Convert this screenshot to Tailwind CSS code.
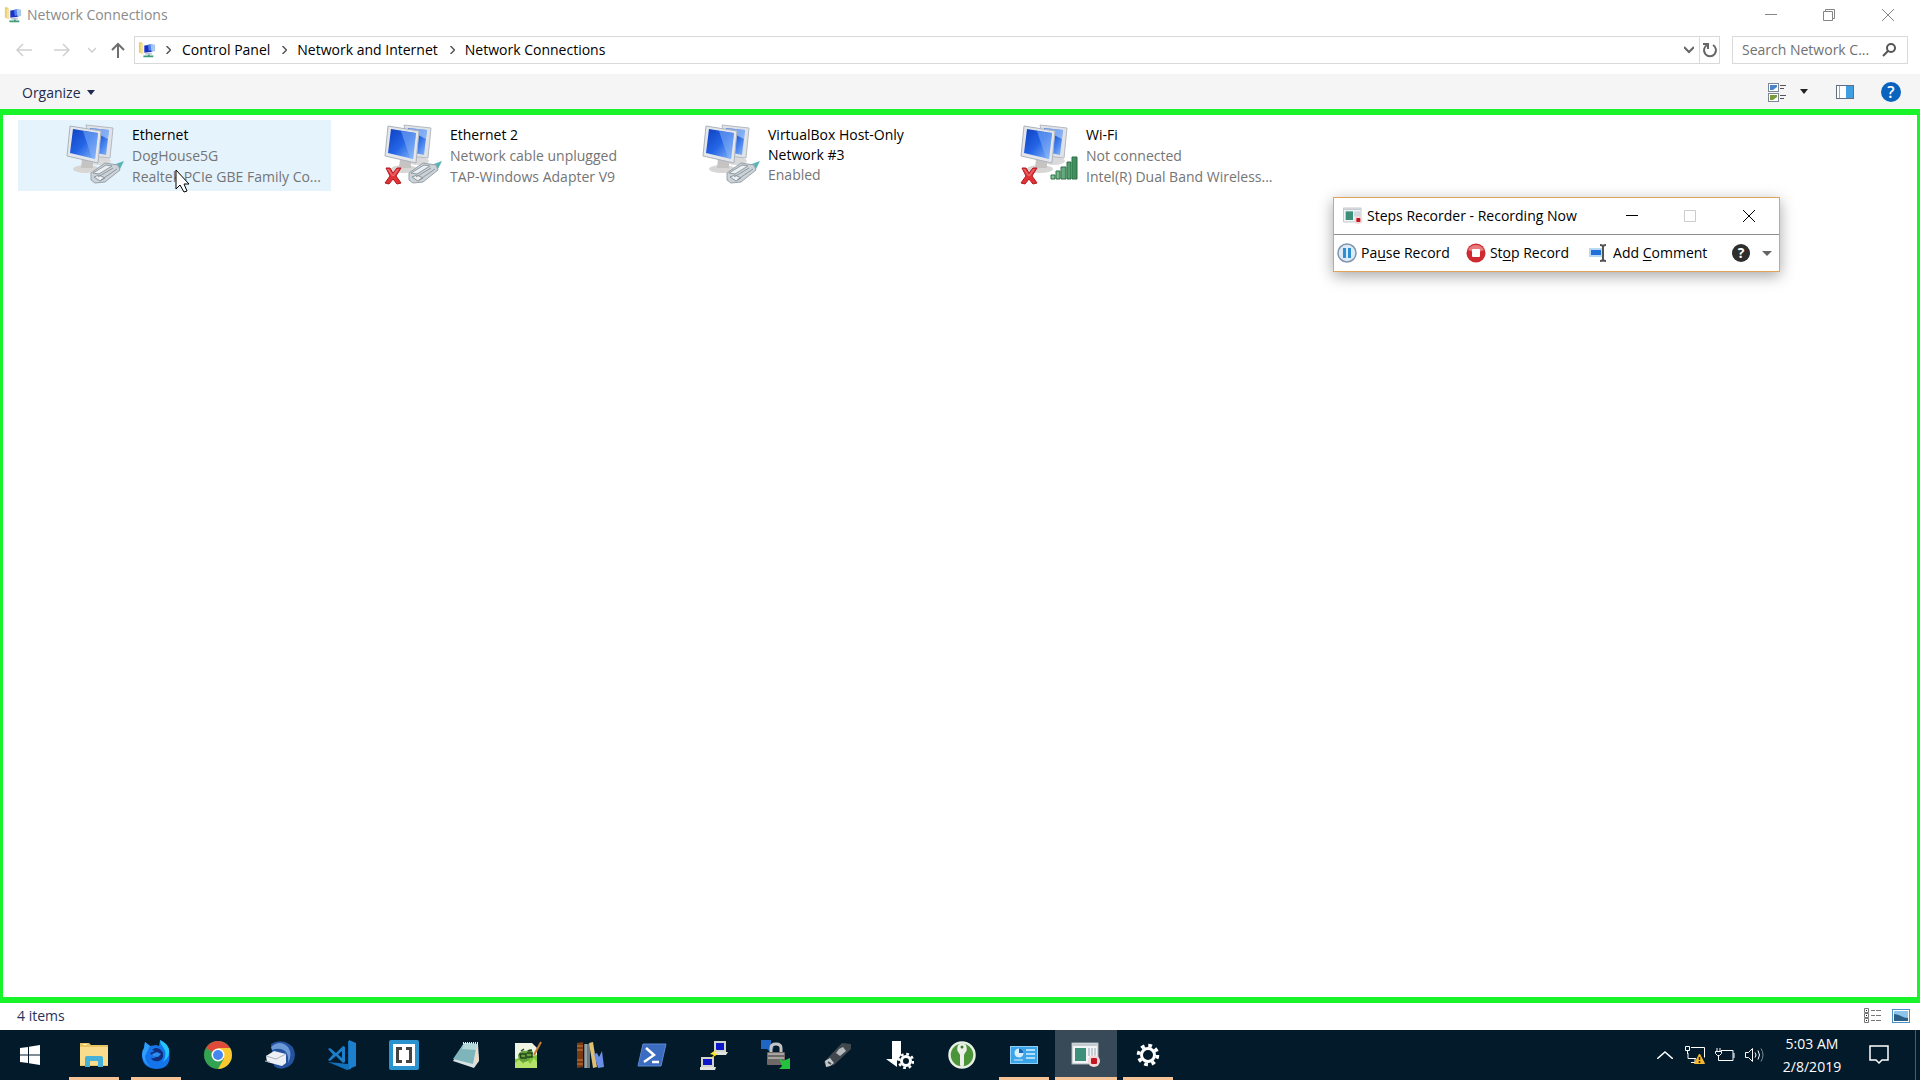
<!DOCTYPE html>
<html lang="en">
<head>
    <meta charset="UTF-8">
    <meta name="viewport" content="width=device-width, initial-scale=1.0">
    <title>Network Connections</title>
    <script src="https://cdn.jsdelivr.net/npm/@tailwindcss/browser@4"></script>
</head>
<body class="h-screen flex flex-col overflow-hidden bg-white text-sm text-black font-['Open_Sans',sans-serif]">

    <!-- shared icons -->
    <svg class="absolute size-0" aria-hidden="true">
        <defs>
            <linearGradient id="screen" x1="0" y1="0" x2="1" y2="1">
                <stop offset="0" stop-color="#0c3fc0"/>
                <stop offset=".5" stop-color="#2566e6"/>
                <stop offset="1" stop-color="#8cbcfa"/>
            </linearGradient>
            <linearGradient id="bars" x1="0" y1="0" x2="1" y2="0">
                <stop offset="0" stop-color="#8ec9a0"/>
                <stop offset="1" stop-color="#358a55"/>
            </linearGradient>
            <symbol id="net-small" viewBox="0 0 20 20">
                <path d="M1 1l4 1v12l-4-1z" fill="#e8cf6a"/>
                <path d="M3 3l3 1v11l-3-1z" fill="#f4e3a0"/>
                <path d="M7 5l9-1v8l-9 1z" fill="#1a2fc4"/>
                <path d="M11 4l5 0v6l-4 1z" fill="#4f7fee"/>
                <path d="M14 4h5v7l-4 1z" fill="#a9c6ee"/>
                <path d="M8 13h7l1 2H8z" fill="#bcc6d0"/>
                <path d="M6 17h11M12 15v3" stroke="#3f9a7c" stroke-width="2"/>
            </symbol>
            <symbol id="pcs" viewBox="0 0 60 60">
                <ellipse cx="34" cy="37" rx="11" ry="4" fill="#dadada"/>
                <path d="M20 1l27 3-3 30-18-2z" fill="#dfe3e8" stroke="#b4bac1"/>
                <path d="M24 4l19 2-3 25-14-3z" fill="url(#screen)"/>
                <path d="M24 4l19 2-1 9-16-8z" fill="#c0dcfc" opacity=".6"/>
                <ellipse cx="20" cy="45" rx="13" ry="4" fill="#d8d6d4"/>
                <path d="M16 35h11l0 9H15z" fill="#c6c4c2"/>
                <path d="M4 2l31 5-3 32L1 32z" fill="#e3e6ea" stroke="#acb3bb"/>
                <path d="M7 5l25 4-3 26L4 29z" fill="url(#screen)"/>
                <path d="M17 7l15 2-3 26-3-1z" fill="#8ab6f8" opacity=".5"/>
            </symbol>
            <symbol id="plug" viewBox="0 0 34 24">
                <path d="M23 5l11-4-4 8-6 3z" fill="#5ab4b6"/>
                <path d="M1 13L15 3l13 2 2 5-15 12-10 1-4-3z" fill="#ccd3d8" stroke="#98a2aa"/>
                <path d="M3 13L16 5l6 1L9 14z" fill="#eceff1" stroke="#8f9aa2"/>
                <path d="M8 17L23 8M11 20L27 9M4 17l5-2 6 3-5 3z" stroke="#8b969e" fill="#eef0f2"/>
            </symbol>
            <symbol id="cross" viewBox="0 0 18 18">
                <path d="M2 1l4 0 3 5 4-5h4l-5 8 5 7-4 1-4-5-4 5-4-1 5-7z" fill="#e23237" stroke="#b3171c"/>
                <path d="M3 2h2l4 6 4-6h2l-5 7H8z" fill="#f08a8c" opacity=".6"/>
            </symbol>
            <symbol id="signal" viewBox="0 0 28 24">
                <path d="M1 19h4v4H1zM6 15h4v8H6zM11 11h5v12h-5zM17 6h4v17h-4zM22 1h5v22h-5z" fill="url(#bars)" stroke="#2d6f47"/>
            </symbol>
            <symbol id="recorder" viewBox="0 0 30 26">
                <rect x="1" y="1" width="26" height="21" fill="#f2f4f5" stroke="#a9b2b8"/>
                <path d="M2 2h24v2H2z" fill="#c2cbd1"/>
                <path d="M4 6h11v13H4z" fill="#3d917b"/>
                <path d="M18 6v8M21 6v8M24 6v8" stroke="#93a8b5"/>
                <circle cx="23" cy="19" r="6" fill="#f3d9da"/>
                <rect x="20" y="16" width="6" height="6" rx="1" fill="#c41620"/>
            </symbol>
        </defs>
    </svg>

    <header>
        <div class="flex items-center h-[30px] pl-1 pr-0.5">
            <svg class="size-[18px]"><use href="#net-small"/></svg>
            <h1 class="ml-[5px] text-[#8a8a8a]">Network Connections</h1>
            <div class="ml-auto flex text-[#858585]">
                <button class="w-[58px] h-7 flex items-center justify-center" aria-label="Minimize">
                    <svg class="size-3" viewBox="0 0 12 12" stroke="currentColor"><path d="M0 5.500h12"/></svg>
                </button>
                <button class="w-[58px] h-7 flex items-center justify-center" aria-label="Restore">
                    <svg class="size-3" viewBox="0 0 12 12" fill="none" stroke="currentColor"><path d="M.5 2.500h9v9h-9zM2.500 2.500v-2h9v9h-2"/></svg>
                </button>
                <button class="w-[60px] h-7 flex items-center justify-center" aria-label="Close">
                    <svg class="size-3" viewBox="0 0 12 12" stroke="currentColor"><path d="M0 0l12 12M12 0L0 12"/></svg>
                </button>
            </div>
        </div>

        <div class="flex items-center h-10 mb-1 pr-3">
            <nav class="flex items-center w-[134px] pl-4" aria-label="History">
                <button class="w-[38px]" aria-label="Back">
                    <svg class="w-4 h-3.5" viewBox="0 0 16 14" fill="none" stroke="#cfcfcf" stroke-width="1.500"><path d="M16 7H1M7 1L1 7l6 6"/></svg>
                </button>
                <button class="w-[34px]" aria-label="Forward">
                    <svg class="w-4 h-3.5" viewBox="0 0 16 14" fill="none" stroke="#cfcfcf" stroke-width="1.500"><path d="M0 7h15M9 1l6 6-6 6"/></svg>
                </button>
                <button class="w-[22px]" aria-label="Recent locations">
                    <svg class="w-2 h-1.5" viewBox="0 0 8 6" fill="none" stroke="#cfcfcf" stroke-width="1.500"><path d="M0 1l4 4 4-4"/></svg>
                </button>
                <button aria-label="Up">
                    <svg class="w-4 h-4" viewBox="0 0 16 16" fill="none" stroke="#6e6e6e" stroke-width="2"><path d="M8 16V2M2 8l6-6 6 6"/></svg>
                </button>
            </nav>
            <div class="flex-1 flex items-center h-7 border border-[#d9d9d9]">
                <svg class="size-[18px] ml-[3px]"><use href="#net-small"/></svg>
                <svg class="w-[5px] h-2 ml-2.5" viewBox="0 0 5 8" fill="none" stroke="#555" stroke-width="1.500"><path d="M.5 0l4 4-4 4"/></svg>
                <a href="#" class="ml-[11px]">Control Panel</a>
                <svg class="w-[5px] h-2 ml-3" viewBox="0 0 5 8" fill="none" stroke="#555" stroke-width="1.500"><path d="M.5 0l4 4-4 4"/></svg>
                <a href="#" class="ml-2.5">Network and Internet</a>
                <svg class="w-[5px] h-2 ml-3" viewBox="0 0 5 8" fill="none" stroke="#555" stroke-width="1.500"><path d="M.5 0l4 4-4 4"/></svg>
                <a href="#" class="ml-2.5">Network Connections</a>
                <button class="ml-auto w-5 flex justify-center" aria-label="Previous locations">
                    <svg class="w-2.5 h-2" viewBox="0 0 10 8" fill="none" stroke="#666" stroke-width="2"><path d="M0 1l5 5 5-5"/></svg>
                </button>
                <button class="w-5 h-full flex items-center justify-center border-l border-[#d9d9d9]" aria-label="Refresh">
                    <svg class="size-4" viewBox="0 0 16 16" fill="none" stroke="#666" stroke-width="2"><path d="M11 3A6 6 0 1 1 5 3"/><path d="M1 2h5v5"/></svg>
                </button>
            </div>
            <form class="ml-3 w-[176px] h-7 flex items-center border border-[#d9d9d9]">
                <input id="search" type="text" aria-label="Search Network Connections" placeholder="Search Network C..." class="flex-1 min-w-0 pl-[9px] outline-none placeholder:text-[#717171]">
                <button class="w-9 flex justify-center" type="submit" aria-label="Search">
                    <svg class="size-3.5" viewBox="0 0 14 14" fill="none" stroke="#555" stroke-width="2"><circle cx="9" cy="5" r="4"/><path d="M6 8l-5 5"/></svg>
                </button>
            </form>
        </div>

        <div class="flex items-center h-[35px] pl-[22px] pr-[19px] bg-[#f5f5f6] text-[#1e2b4d]">
            <button class="flex items-center gap-1.5 pt-0.5">
                Organize
                <svg class="w-2 h-[5px]" viewBox="0 0 8 5" fill="currentColor"><path d="M0 0h8L4 5z"/></svg>
            </button>
            <div class="ml-auto flex items-center">
                <button aria-label="View">
                    <svg class="w-[18px] h-5" viewBox="0 0 18 20">
                        <rect x=".5" y="1.500" width="10" height="8" fill="#fff" stroke="#7d8794"/>
                        <path d="M2 3h7v2L5 8H2z" fill="#4b83c9"/>
                        <rect x=".5" y="11.500" width="10" height="8" fill="#fff" stroke="#7d8794"/>
                        <path d="M2 13h7v2l-4 3H2z" fill="#7b9a3c"/>
                        <path d="M12 3.500h6M12 6.500h4M12 13.500h6M12 16.500h4" stroke="#555"/>
                    </svg>
                </button>
                <button class="ml-3.5" aria-label="More view options">
                    <svg class="w-2 h-[5px]" viewBox="0 0 8 5" fill="#222"><path d="M0 0h8L4 5z"/></svg>
                </button>
                <button class="ml-7" aria-label="Preview pane">
                    <svg class="w-[18px] h-3.5" viewBox="0 0 18 14">
                        <rect x=".5" y=".5" width="17" height="13" fill="#fff" stroke="#5d6f80"/>
                        <path d="M3.500 1v12" stroke="#9aa7b2"/>
                        <path d="M10 1h7v12h-7z" fill="#3f9fe0"/>
                    </svg>
                </button>
                <button class="ml-[27px] size-5 rounded-full bg-[#0a64bd] text-white text-base leading-5 font-semibold" aria-label="Help">?</button>
            </div>
        </div>
    </header>

    <main class="relative flex-1 border-x-[3px] border-y-[6px] border-[#17f52a]">
        <ul class="flex flex-wrap gap-x-[5px] pl-[15px] pt-[5px] leading-[21px] text-[#757575]">
            <li class="flex w-[313px] h-[71px] pl-12 pt-1 bg-[#e5f3fd]">
                <div class="relative w-[66px] shrink-0">
                    <svg class="size-[60px]"><use href="#pcs"/></svg>
                    <svg class="absolute left-6 top-9 w-[34px] h-6"><use href="#plug"/></svg>
                </div>
                <div class="min-w-0">
                    <h2 class="text-black">Ethernet</h2>
                    <p>DogHouse5G</p>
                    <p class="truncate">Realtek PCIe GBE Family Co...</p>
                </div>
            </li>
            <li class="flex w-[313px] h-[71px] pl-12 pt-1">
                <div class="relative w-[66px] shrink-0">
                    <svg class="size-[60px]"><use href="#pcs"/></svg>
                    <svg class="absolute left-6 top-9 w-[34px] h-6"><use href="#plug"/></svg>
                    <svg class="absolute left-0 top-[43px] size-[18px]"><use href="#cross"/></svg>
                </div>
                <div class="min-w-0">
                    <h2 class="text-black">Ethernet 2</h2>
                    <p>Network cable unplugged</p>
                    <p class="truncate">TAP-Windows Adapter V9</p>
                </div>
            </li>
            <li class="flex w-[313px] h-[71px] pl-12 pt-1">
                <div class="relative w-[66px] shrink-0">
                    <svg class="size-[60px]"><use href="#pcs"/></svg>
                    <svg class="absolute left-6 top-9 w-[34px] h-6"><use href="#plug"/></svg>
                </div>
                <div class="min-w-0 pt-px leading-5">
                    <h2 class="text-black">VirtualBox Host-Only<br>Network #3</h2>
                    <p>Enabled</p>
                </div>
            </li>
            <li class="flex w-[313px] h-[71px] pl-12 pt-1">
                <div class="relative w-[66px] shrink-0">
                    <svg class="size-[60px]"><use href="#pcs"/></svg>
                    <svg class="absolute left-[30px] top-8 w-7 h-6"><use href="#signal"/></svg>
                    <svg class="absolute left-0 top-[43px] size-[18px]"><use href="#cross"/></svg>
                </div>
                <div class="min-w-0">
                    <h2 class="text-black">Wi-Fi</h2>
                    <p>Not connected</p>
                    <p class="truncate">Intel(R) Dual Band Wireless...</p>
                </div>
            </li>
        </ul>
    </main>

    <footer class="flex items-center h-[27px] pl-[17px] pr-2.5 pb-0.5 text-[#26335c]">
        <span>4 items</span>
        <div class="ml-auto flex items-center gap-2.5">
            <button aria-label="Details view">
                <svg class="w-[18px] h-4" viewBox="0 0 18 16" fill="none" stroke="#777">
                    <path d="M.5.5h4v4h-4zM.5 5.500h4v4h-4zM.5 10.500h4v4h-4zM7 2.500h4m1 0h5M7 7.500h4m1 0h5M7 12.500h4m1 0h5"/>
                    <path d="M2 2.500h1M2 7.500h1M2 12.500h1" stroke="#222"/>
                </svg>
            </button>
            <button aria-label="Large icons view">
                <svg class="w-[18px] h-3.5" viewBox="0 0 18 14">
                    <rect x=".5" y=".5" width="17" height="13" fill="#fff" stroke="#4a90c8"/>
                    <path d="M2 2h14v10H2z" fill="#8cc4ea"/>
                    <path d="M2 5c5 0 9 4 14 4v3H2z" fill="#2c5f86"/>
                </svg>
            </button>
        </div>
    </footer>

    <!-- taskbar -->
    <div class="flex h-[50px] bg-[#031a2a] text-white">
        <button class="w-[63px] pr-[3px] flex items-center justify-center" aria-label="Start">
            <svg class="size-5" viewBox="0 0 20 20" fill="#fff"><path d="M0 3l8-1v7.500H0zM9 1.800L20 0v9.500H9zM0 10.500h8V18l-8-1zM9 10.500h11V20L9 18.200z"/></svg>
        </button>
        <button class="relative w-[62px] flex items-center justify-center" aria-label="File Explorer">
            <svg class="size-7" viewBox="0 0 28 28">
                <path d="M0 2h9l2 2h17v21H0z" fill="#e9c465"/>
                <path d="M0 6h28v18H0z" fill="#f9dc8c"/>
                <path d="M5 17q0-2 2-2h14q2 0 2 2v9h-5v-6h-8v6H5z" fill="#45b0d8"/>
                <path d="M3 3.500h4" stroke="#fff3c4"/>
            </svg>
            <span class="absolute bottom-0 inset-x-1.5 h-[3px] bg-[#f5c396]"></span>
        </button>
        <button class="relative w-[62px] flex items-center justify-center" aria-label="Firefox">
            <svg class="size-[30px]" viewBox="0 0 30 30">
                <path d="M3 8L4 2l5 4 6-1 3 1 1-6q8 5 9 12 3 17-13 17Q1 28 1 15q0-4 2-7z" fill="#1474ea"/>
                <path d="M19 0q0 4 3 7 5 7 0 15 8-6 6-13-2-6-9-9z" fill="#23c5fa"/>
                <path d="M3 8L4 2l5 4-2 4-3 6q0 8 7 11-9-3-10-12 0-4 2-7z" fill="#2ea0fb"/>
                <path d="M11 10l3-2q6 0 8 5 1 6-4 8-6 1-8-3 4 1 6-2l-5-1-2-2q3-1 5-2z" fill="#122c7c"/>
                <path d="M11 14l5-2 4 2-3 3-5-1z" fill="#2b8df0"/>
            </svg>
            <span class="absolute bottom-0 inset-x-1.5 h-[3px] bg-[#f5c396]"></span>
        </button>
        <button class="w-[62px] flex items-center justify-center" aria-label="Chrome">
            <svg class="size-7" viewBox="0 0 28 28">
                <circle cx="14" cy="14" r="14" fill="#34a253"/>
                <path d="M14 14L1.900 7A14 14 0 0 1 26.100 7z" fill="#e04a3a"/>
                <path d="M14 7h12.100A14 14 0 0 1 14 28l6-10.500z" fill="#fbc92f"/>
                <circle cx="14" cy="14" r="6.500" fill="#fff"/>
                <circle cx="14" cy="14" r="5" fill="#4487f0"/>
            </svg>
        </button>
        <button class="w-[62px] flex items-center justify-center" aria-label="Thunderbird">
            <svg class="w-[30px] h-7" viewBox="0 0 30 28">
                <path d="M6 3Q12-1 20 1q9 3 10 12 0 11-10 14-7 2-11-2z" fill="#24529f"/>
                <path d="M6 6Q15-2 23 6q5 7 0 16 1-8-3-12-5-4-13-1z" fill="#6d9ad6"/>
                <path d="M1 15l8-5 12 3 0 9-4 3L2 21z" fill="#eceff4"/>
                <path d="M1 15l10 3 10-5M0 20l5 1" fill="none" stroke="#a9b2c2"/>
            </svg>
        </button>
        <button class="w-[62px] flex items-center justify-center" aria-label="Visual Studio Code">
            <svg class="size-[30px]" viewBox="0 0 30 30">
                <path d="M1 22l20 2V1l3 0v28l-4 1z" fill="#1273bd"/>
                <path d="M22 0l7 3v23l-7 3z" fill="#1d80cf"/>
                <path d="M3 8l6 5 7-7 2 1v15l-2 1-7-7-6 5-2-1 5-5.500-5-5.500zM15 11l-4 3.500 4 3.500z" fill="#1b7fca" fill-rule="evenodd"/>
            </svg>
        </button>
        <button class="w-[62px] flex items-center justify-center" aria-label="Brackets">
            <svg class="size-[30px]" viewBox="0 0 30 30">
                <rect width="30" height="30" rx="2" fill="#2a93cf"/>
                <rect x="4" y="4" width="22" height="22" fill="#fff"/>
                <path d="M13 8.500H8.500v13H13M17 8.500h4.500v13H17" fill="none" stroke="#444" stroke-width="3"/>
            </svg>
        </button>
        <button class="w-[62px] flex items-center justify-center" aria-label="Notepad">
            <svg class="w-7 h-[26px]" viewBox="0 0 28 26">
                <path d="M12 1l14 1 1 17-5 7-21-7z" fill="#d6e3e4"/>
                <path d="M12 1l13 1-4 20-20-5z" fill="#7eb5ba"/>
                <path d="M12 1l13 1-1 6-14-1z" fill="#b5d8da"/>
                <path d="M25 2l2 16-5 6z" fill="#efd9c7"/>
                <path d="M11 1h15" stroke="#e9eef0" stroke-dasharray="1 1" stroke-width="2"/>
            </svg>
        </button>
        <button class="w-[62px] flex items-center justify-center" aria-label="Notepad++">
            <svg class="size-7" viewBox="0 0 28 28">
                <path d="M1 2h17l5 5v20H1z" fill="#eef5e4"/>
                <path d="M1 18l22-4v13H1z" fill="#7fc63a"/>
                <path d="M1 22l5-4 3 5 4-5 3 5 4-6 3 4v6H1z" fill="#b5e26a"/>
                <path d="M4 14q3-5 8-4l4-2 3 3-2 5q-3 6-9 5-4-2-4-7z" fill="#64a23c"/>
                <path d="M6 13h6v4H7zM13 12h5v4h-5M7 10l3-2M14 10l4-1" fill="none" stroke="#26451d" stroke-width="1.500"/>
                <path d="M27 1l-7 13" stroke="#c67a2d" stroke-width="2"/>
            </svg>
        </button>
        <button class="w-[62px] flex items-center justify-center" aria-label="Library">
            <svg class="size-7" viewBox="0 0 28 28">
                <path d="M1 2l6-1v25l-6 1z" fill="#7b3c15"/>
                <path d="M1 5h6M1 9h6M1 19h6M1 23h6" stroke="#c9803f"/>
                <path d="M8 3h6v24H8z" fill="#6b7a80"/>
                <path d="M10 3v24" stroke="#96a4a8" stroke-width="2"/>
                <path d="M13 2l4-1 4 25-4 1z" fill="#e0bf73"/>
                <path d="M18 13l3-1 2 4 3-6 2 16-6 1z" fill="#6b8fe6"/>
            </svg>
        </button>
        <button class="w-[62px] flex items-center justify-center" aria-label="PowerShell">
            <svg class="w-[30px] h-6" viewBox="0 0 30 24">
                <path d="M6 1h23l-5 22H1z" fill="#3b6cc0" stroke="#5b88d2"/>
                <path d="M9 5l8 7-10 7M15 19h7" fill="none" stroke="#fff" stroke-width="2.500"/>
            </svg>
        </button>
        <button class="w-[62px] flex items-center justify-center" aria-label="PuTTY">
            <svg class="w-7 h-[30px]" viewBox="0 0 28 30">
                <path d="M14 1h12v11H14zM1 17h13v10H1z" fill="#d3d3cd"/>
                <path d="M16 3h8v7h-8zM3 19h9v6H3z" fill="#0b16c9"/>
                <path d="M13 12h15l-2 3H13zM0 27h16l-1 3H0z" fill="#e4e4df"/>
                <path d="M17 9l-7 5 4 1-4 4 8-5-4-1z" fill="#ffe625"/>
            </svg>
        </button>
        <button class="w-[62px] flex items-center justify-center" aria-label="WinSCP">
            <svg class="size-[30px]" viewBox="0 0 30 30">
                <path d="M0 0h10v4l3 4-5 3-2-2H0z" fill="#1e66c2"/>
                <path d="M10 14V8q0-4 5-4t5 4v6" fill="none" stroke="#c2c5c6" stroke-width="3"/>
                <rect x="6" y="12" width="18" height="13" rx="1" fill="#6e6967"/>
                <path d="M7 14h16M7 18h16" stroke="#a8a4a1" stroke-width="2"/>
                <path d="M18 18l4 3 7-3v11H18l3-3z" fill="#25c23d"/>
            </svg>
        </button>
        <button class="w-[62px] flex items-center justify-center" aria-label="USB drive">
            <svg class="w-7 h-[26px]" viewBox="0 0 28 26">
                <path d="M18 1l9 1 0 5-17 16-7 2-3-5z" fill="#41484d"/>
                <path d="M15 7l4-2 3 4-6 5-4-3z" fill="#b4babd"/>
                <path d="M1 19l5-3 4 5-4 3-4 1z" fill="#c4cbce"/>
                <path d="M4 20l3 2" stroke="#4a5156" stroke-width="2"/>
            </svg>
        </button>
        <button class="w-[62px] flex items-center justify-center" aria-label="Download settings">
            <svg class="size-7" viewBox="0 0 28 28">
                <path d="M6 0h9v14l-4 6v6L0 18h6z" fill="#fff"/>
                <circle cx="20" cy="20" r="4.500" fill="none" stroke="#fff" stroke-width="3"/>
                <circle cx="20" cy="20" r="7" fill="none" stroke="#fff" stroke-width="2.500" stroke-dasharray="2.750 2.750"/>
            </svg>
        </button>
        <button class="w-[62px] flex items-center justify-center" aria-label="KeePass">
            <svg class="size-7" viewBox="0 0 28 28">
                <circle cx="14" cy="14" r="12.500" fill="#4c9438" stroke="#e7f0e3" stroke-width="2.500"/>
                <path d="M10 4q4-3 8 0 2 5-1 8l-1 2v10l-2 3-2-3V14l-1-2q-3-3-1-8z" fill="#eef1ea"/>
                <circle cx="14" cy="6" r="1.500" fill="#3a7a2c"/>
            </svg>
        </button>
        <button class="relative w-[62px] flex items-center justify-center" aria-label="Control Panel">
            <svg class="w-7 h-[18px]" viewBox="0 0 28 18">
                <rect x=".5" y=".5" width="27" height="17" fill="#3aa5ea" stroke="#8fd0f7"/>
                <circle cx="9" cy="7" r="4.500" fill="#d7f0ff"/>
                <path d="M9 7V2.500A4.500 4.500 0 0 1 13.500 7z" fill="#1466b8"/>
                <path d="M16 4h9M16 8h9M16 12h9" stroke="#d6efff" stroke-width="1.500"/>
                <path d="M4 14h9" stroke="#d6efff"/>
            </svg>
            <span class="absolute bottom-0 inset-x-1.5 h-[3px] bg-[#f5c396]"></span>
        </button>
        <button class="relative w-[62px] flex items-center justify-center bg-[#384957]" aria-label="Steps Recorder">
            <svg class="w-[30px] h-[26px]"><use href="#recorder"/></svg>
            <span class="absolute bottom-0 inset-x-0 h-[3px] bg-[#f5c396]"></span>
        </button>
        <button class="relative w-[62px] flex items-center justify-center" aria-label="Settings">
            <svg class="size-6" viewBox="0 0 24 24" fill="none" stroke="#fff">
                <circle cx="12" cy="12" r="6.500" stroke-width="3"/>
                <circle cx="12" cy="12" r="9.500" stroke-width="3.500" stroke-dasharray="3.730 3.730"/>
            </svg>
            <span class="absolute bottom-0 inset-x-1.5 h-[3px] bg-[#f5c396]"></span>
        </button>

        <div class="ml-auto flex items-center pr-1">
            <button aria-label="Show hidden icons">
                <svg class="w-4 h-2" viewBox="0 0 16 8" fill="none" stroke="#fff" stroke-width="1.500"><path d="M0 8l8-7 8 7"/></svg>
            </button>
            <button class="ml-3" aria-label="Network">
                <svg class="w-5 h-[18px]" viewBox="0 0 20 18" fill="none" stroke="#fff">
                    <path d="M6 1.500h13.500v10M3 7v5.500h8M10 13v3M6 16.500h6M.5.5h4v4h-4zM2.500 5v3"/>
                    <path d="M14.500 8l5 9.500h-10z" fill="#f6b92b" stroke="#f6b92b"/>
                    <path d="M14.500 11v3M14.500 15v2" stroke="#222" stroke-width="1.500"/>
                </svg>
            </button>
            <button class="ml-2.5" aria-label="Battery">
                <svg class="w-5 h-3.5" viewBox="0 0 20 14" fill="none" stroke="#fff">
                    <path d="M6 2.500h12v10H5M19 5v5M2 0v3M5 0v3M.5 3.500h6v2l-2 2h-2l-2-2zM3.500 8v4.500H5"/>
                </svg>
            </button>
            <button class="ml-2.5" aria-label="Volume">
                <svg class="w-5 h-4" viewBox="0 0 20 16" fill="none" stroke="#fff">
                    <path d="M.5 5.500h3l4-4v13l-4-4h-3zM10 5.500q2 2.500 0 5M13 3.500q3 4.500 0 9"/>
                    <path d="M16 1.500q4 6.500 0 13" stroke="#7d8b95"/>
                </svg>
            </button>
            <button class="ml-[15px] w-16 leading-[23px] text-center whitespace-nowrap">5:03 AM<br>2/8/2019</button>
            <button class="ml-[25px]" aria-label="Notifications">
                <svg class="w-5 h-5" viewBox="0 0 20 20" fill="none" stroke="#fff" stroke-width="1.500"><path d="M1 1h18v14h-6l-3 3-3-3H1z"/></svg>
            </button>
            <span class="ml-[26px] w-px h-[50px] bg-[#4b5c69]"></span>
        </div>
    </div>

    <!-- floating recorder window -->
    <section class="absolute left-[1333px] top-[197px] w-[447px] border border-[#dfa458] bg-white shadow-[0_4px_14px_rgba(0,0,0,0.35)]">
        <div class="flex items-center h-[37px] pl-[9px] border-b border-[#8f8f8f]">
            <svg class="w-5 h-[18px]"><use href="#recorder"/></svg>
            <h2 class="ml-1">Steps Recorder - Recording Now</h2>
            <div class="ml-auto flex">
                <button class="w-[58px] h-8 flex items-center justify-center" aria-label="Minimize recorder">
                    <svg class="size-3" viewBox="0 0 12 12" stroke="#000"><path d="M0 5.500h12"/></svg>
                </button>
                <button class="w-[58px] h-8 flex items-center justify-center" aria-label="Maximize recorder" disabled>
                    <svg class="size-3" viewBox="0 0 12 12" fill="none" stroke="#ccc"><path d="M.5.5h11v11H.5z"/></svg>
                </button>
                <button class="w-[60px] h-8 flex items-center justify-center" aria-label="Close recorder">
                    <svg class="size-3" viewBox="0 0 12 12" stroke="#000"><path d="M0 0l12 12M12 0L0 12"/></svg>
                </button>
            </div>
        </div>
        <div class="flex items-center h-9 pl-[3px] pr-[7px] whitespace-nowrap">
            <button class="flex items-center gap-1">
                <svg class="size-5" viewBox="0 0 20 20">
                    <circle cx="10" cy="10" r="9" fill="#dceaf7" stroke="#7f94ab" stroke-width="1.500"/>
                    <path d="M6 5h3v10H6zM11 5h3v10h-3z" fill="#2f8fce"/>
                </svg>
                <span>Pa<u class="underline-offset-2">u</u>se Record</span>
            </button>
            <button class="ml-4 flex items-center gap-1">
                <svg class="size-5" viewBox="0 0 20 20">
                    <circle cx="10" cy="10" r="9.500" fill="#cf2a30"/>
                    <path d="M2 7a9 9 0 0 1 16 0q-8 4-16 0z" fill="#e77b7d"/>
                    <rect x="6" y="6" width="8" height="8" rx="1" fill="#fff"/>
                </svg>
                <span>St<u class="underline-offset-2">o</u>p Record</span>
            </button>
            <button class="ml-5 flex items-center gap-1.5">
                <svg class="w-[18px] h-[18px]" viewBox="0 0 18 18">
                    <path d="M0 4h14v9H0z" fill="#b9d8f5"/>
                    <path d="M2 6h10v5H2z" fill="#1f6fd8"/>
                    <path d="M11 1q3 0 3 2 0-2 3-2M14 3v12M11 17q3 0 3-2 0 2 3 2" fill="none" stroke="#555" stroke-width="2"/>
                </svg>
                <span>Add <u class="underline-offset-2">C</u>omment</span>
            </button>
            <button class="ml-auto size-[18px] rounded-full bg-[#2e2e2e] text-white text-sm leading-[18px] font-bold" aria-label="Recorder help">?</button>
            <button class="ml-3" aria-label="Recorder options">
                <svg class="w-2.5 h-[5px]" viewBox="0 0 10 5" fill="#666"><path d="M0 0h10L5 5z"/></svg>
            </button>
        </div>
    </section>

    <!-- pointer -->
    <svg class="absolute left-[175px] top-[169px] w-[15px] h-6" viewBox="0 0 15 24">
        <path d="M1 1v19l4-4 4 7 3-1-3-7h5z" fill="#fff" stroke="#000"/>
    </svg>
</body>
</html>
